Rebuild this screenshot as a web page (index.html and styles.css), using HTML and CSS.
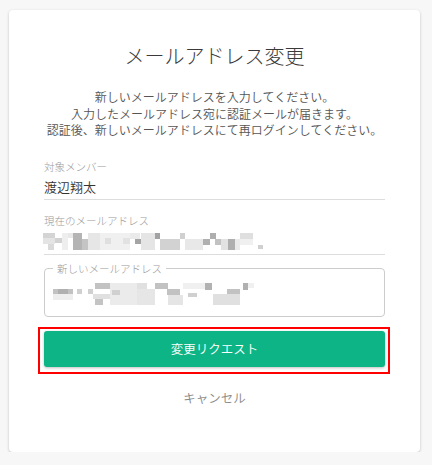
FILE: index.html
```html
<!DOCTYPE html>
<html lang="ja">
<head>
    <meta charset="UTF-8">
    <meta name="viewport" content="width=device-width, initial-scale=1.0">
    <title>メールアドレス変更</title>
    <link rel="stylesheet" href="styles.css">
</head>
<body>
    <div class="card">
        <h1 class="title">メールアドレス変更</h1>
        <p class="lead">
            新しいメールアドレスを入力してください。<br>
            入力したメールアドレス宛に認証メールが届きます。<br>
            認証後、新しいメールアドレスにて再ログインしてください。
        </p>

        <div class="field">
            <div class="field-label">対象メンバー</div>
            <div class="field-value">渡辺翔太</div>
        </div>

        <div class="field">
            <div class="field-label">現在のメールアドレス</div>
            <!-- pixelated address -->
            <svg class="mosaic mosaic-current" width="222" height="17" viewBox="0 0 222 17" shape-rendering="crispEdges">
                <rect x="0" y="0" width="12" height="5" fill="#d4d4d4"/>
                <rect x="0" y="5" width="12" height="6" fill="#e4e4e4"/>
                <rect x="5" y="11" width="6" height="6" fill="#dadada"/>
                <rect x="12" y="5" width="7" height="5" fill="#d2d2d2"/>
                <rect x="19" y="0" width="6" height="17" fill="#eeeeee"/>
                <rect x="25" y="0" width="6" height="5" fill="#e8e8e8"/>
                <rect x="30" y="0" width="9" height="17" fill="#b4b4b4"/>
                <rect x="39" y="6" width="6" height="11" fill="#c4c4c4"/>
                <rect x="45" y="0" width="12" height="17" fill="#e6e6e6"/>
                <rect x="57" y="0" width="30" height="17" fill="#f0f0f0"/>
                <rect x="62" y="5" width="6" height="6" fill="#dfdfdf"/>
                <rect x="80" y="5" width="7" height="6" fill="#e2e2e2"/>
                <rect x="87" y="0" width="10" height="6" fill="#eaeaea"/>
                <rect x="92" y="6" width="6" height="5" fill="#a4a4a4"/>
                <rect x="98" y="0" width="14" height="17" fill="#e5e5e5"/>
                <rect x="112" y="0" width="5" height="6" fill="#a2a2a2"/>
                <rect x="117" y="6" width="20" height="11" fill="#d2d2d2"/>
                <rect x="137" y="0" width="5" height="6" fill="#d0d0d0"/>
                <rect x="142" y="6" width="18" height="11" fill="#e8e8e8"/>
                <rect x="160" y="6" width="7" height="6" fill="#b0b0b0"/>
                <rect x="167" y="0" width="6" height="6" fill="#aeaeae"/>
                <rect x="172" y="6" width="6" height="6" fill="#c2c2c2"/>
                <rect x="178" y="6" width="7" height="11" fill="#e2e2e2"/>
                <rect x="185" y="6" width="7" height="11" fill="#afafaf"/>
                <rect x="192" y="6" width="5" height="11" fill="#eaeaea"/>
                <rect x="197" y="0" width="13" height="6" fill="#dfdfdf"/>
                <rect x="197" y="6" width="13" height="6" fill="#f0f0f0"/>
                <rect x="215" y="12" width="5" height="4" fill="#d0d0d0"/>
            </svg>
        </div>

        <fieldset class="outlined">
            <legend>新しいメールアドレス</legend>
            <svg class="mosaic" width="203" height="24" viewBox="0 0 203 24" shape-rendering="crispEdges">
                <rect x="0" y="7" width="20" height="5" fill="#c2c2c2"/>
                <rect x="5" y="7" width="10" height="5" fill="#b0b0b0"/>
                <rect x="0" y="12" width="20" height="6" fill="#eeeeee"/>
                <rect x="24" y="7" width="5" height="5" fill="#d0d0d0"/>
                <rect x="35" y="7" width="5" height="5" fill="#d0d0d0"/>
                <rect x="42" y="1" width="15" height="6" fill="#c2c2c2"/>
                <rect x="40" y="12" width="19" height="5" fill="#e0e0e0"/>
                <rect x="42" y="17" width="8" height="6" fill="#c4c4c4"/>
                <rect x="57" y="1" width="27" height="22" fill="#ebebeb"/>
                <rect x="59" y="8" width="8" height="5" fill="#d0d0d0"/>
                <rect x="84" y="1" width="10" height="6" fill="#e0e0e0"/>
                <rect x="84" y="7" width="18" height="16" fill="#e6e6e6"/>
                <rect x="102" y="1" width="13" height="6" fill="#c2c2c2"/>
                <rect x="114" y="7" width="13" height="6" fill="#c2c2c2"/>
                <rect x="115" y="13" width="15" height="10" fill="#e5e5e5"/>
                <rect x="130" y="1" width="22" height="6" fill="#f0f0f0"/>
                <rect x="135" y="11" width="9" height="4" fill="#d0d0d0"/>
                <rect x="152" y="1" width="7" height="7" fill="#b2b2b2"/>
                <rect x="160" y="12" width="27" height="11" fill="#e0e0e0"/>
                <rect x="174" y="7" width="13" height="5" fill="#c2c2c2"/>
                <rect x="190" y="1" width="5" height="7" fill="#b0b0b0"/>
                <rect x="195" y="1" width="6" height="5" fill="#f0f0f0"/>
            </svg>
        </fieldset>

        <div class="highlight">
            <button class="submit-btn">変更リクエスト</button>
        </div>

        <div class="cancel">キャンセル</div>
    </div>
</body>
</html>
```

FILE: styles.css
```css
* {
    margin: 0;
    padding: 0;
    box-sizing: border-box;
}

body {
    font-family: "Noto Sans CJK JP", "Noto Sans", sans-serif;
    font-weight: 300;
    background: #f7f7f7;
    padding: 10px 12px 0 9px;
    color: #333;
}

.card {
    background: #ffffff;
    border-radius: 4px;
    box-shadow: 0 1px 3px rgba(0, 0, 0, 0.22);
    height: 442px;
    padding: 32px 35px 0;
}

.title {
    font-size: 20px;
    font-weight: 300;
    line-height: 28px;
    text-align: center;
    color: #3a3a3a;
}

.lead {
    margin-top: 19px;
    font-size: 12px;
    font-weight: 350;
    line-height: 16.5px;
    text-align: center;
    color: #555;
}

.field {
    border-bottom: 1px solid #dddddd;
    margin-top: 21px;
}

.field + .field {
    margin-top: 14px;
}

.field-label {
    font-size: 10.5px;
    line-height: 14px;
    color: #999;
}

.field-value {
    margin-top: 4px;
    padding-bottom: 3px;
    font-size: 13px;
    font-weight: 350;
    line-height: 18px;
    color: #333;
}

.mosaic {
    display: block;
}

.mosaic-current {
    margin-top: 5px;
    margin-bottom: 4px;
    margin-left: -1px;
}

.outlined {
    margin-top: 7px;
    border: 1px solid #cccccc;
    border-radius: 4px;
    padding: 6px 8px 10px;
}

.outlined legend {
    font-size: 10.5px;
    line-height: 14px;
    color: #999;
    padding: 0 4px;
}

.highlight {
    margin: 10px -5px 0 -6px;
    border: 2px solid #f00;
    padding: 2px 3px 5px 4px;
}

.submit-btn {
    display: block;
    width: 100%;
    height: 36px;
    border: none;
    border-radius: 3px;
    background: #0db586;
    color: #ffffff;
    font-family: inherit;
    font-weight: 350;
    font-size: 12.5px;
    box-shadow: 0 1px 3px rgba(0, 0, 0, 0.25);
    cursor: pointer;
}

.cancel {
    margin-top: 14px;
    font-size: 12.5px;
    font-weight: 350;
    line-height: 20px;
    text-align: center;
    color: #888;
}
```
